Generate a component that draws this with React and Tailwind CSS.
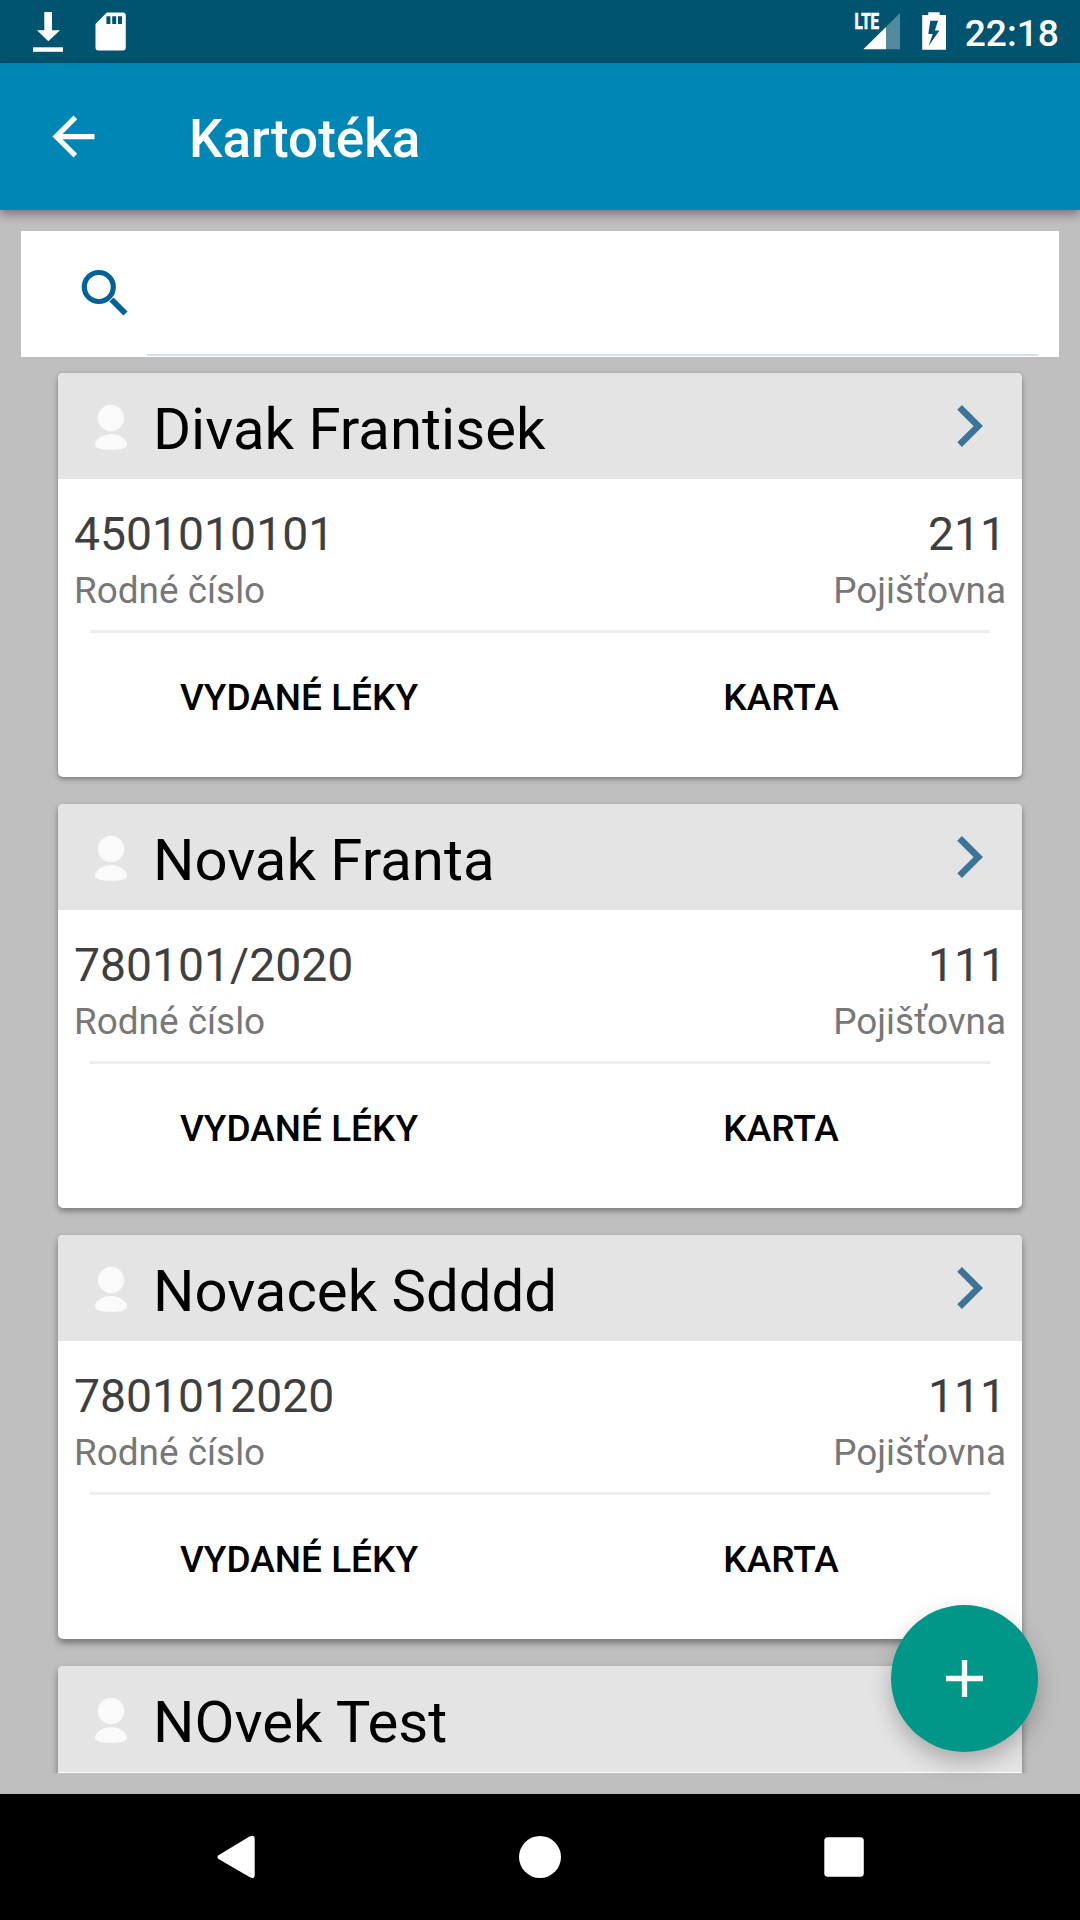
const patients = [
  { name: 'Divak Frantisek', birthNumber: '4501010101', insurer: '211', shadow: 'shadow-[0_2px_5px_rgba(0,0,0,0.38)]' },
  { name: 'Novak Franta', birthNumber: '780101/2020', insurer: '111', shadow: 'shadow-[0_3px_6px_rgba(0,0,0,0.38)]' },
  { name: 'Novacek Sdddd', birthNumber: '7801012020', insurer: '111', shadow: 'shadow-[0_4px_7px_rgba(0,0,0,0.4)]' },
  { name: 'NOvek Test', shadow: 'shadow-[0_4px_7px_rgba(0,0,0,0.4)]' },
];

function StatusBar() {
  return (
    <div className="flex h-[63px] shrink-0 items-start justify-between bg-[#00546f] text-white">
      <svg width="140" height="63" viewBox="0 0 140 63" fill="currentColor">
        <path d="M44.3 12h7.7v18.3h8L48.3 41.3 37 30.3h7.3z" />
        <path d="M33 47.3h30v4.5H33z" />
        <path
          fillRule="evenodd"
          d="M106.8 12.5h16a3 3 0 0 1 3 3v32a3 3 0 0 1-3 3H98.500a3 3 0 0 1-3-3V24zM106.400 16.300v7.700h4v-7.700zM112.200 16.300v7.700h4v-7.700zM118 16.300v7.700h4v-7.700z"
        />
      </svg>
      <div className="flex h-[63px]">
        <svg width="120" height="63" viewBox="846 0 120 63" fill="currentColor">
          <text
            x="854.6"
            y="29"
            fontSize="22"
            fontWeight="700"
            textLength="24.5"
            lengthAdjust="spacingAndGlyphs"
            fontFamily="Roboto, sans-serif"
            stroke="currentColor"
            strokeWidth="0.7"
          >
            LTE
          </text>
          <path d="M900 13v36.300H886V27z" opacity="0.32" />
          <path d="M886 27v22.300h-22.700z" />
          <path
            fillRule="evenodd"
            d="M928.300 12.300h11.400V15h6.300v34.800h-23.800V15h6.100zM930.300 20.800l-2 13.300h4.500l-4.300 12 11-15.500h-4.600l3.100-9.800z"
          />
        </svg>
        <span className="mr-[21px] flex w-[93px] justify-end whitespace-nowrap pt-[5px] text-[37.2px] font-medium leading-[57px]">
          22:18
        </span>
      </div>
    </div>
  );
}

function AppBar() {
  return (
    <header className="relative z-10 flex h-[147px] shrink-0 items-center bg-[#0086b4] text-white shadow-[0_4px_10px_rgba(0,0,0,0.4)]">
      <svg className="ml-[42px]" width="63" height="63" viewBox="0 0 24 24" fill="currentColor">
        <path d="M20 11H7.83l5.59-5.59L12 4l-8 8 8 8 1.41-1.41L7.83 13H20v-2z" />
      </svg>
      <h1 className="ml-[84px] pt-1 text-[53px] font-medium leading-[60px]">Kartotéka</h1>
    </header>
  );
}

function SearchBox() {
  return (
    <div className="mx-[21px] mt-[21px] flex h-[126px] shrink-0 bg-white">
      <svg className="ml-[49px] mt-[27px]" width="70" height="70" viewBox="70 258 70 70" fill="none" stroke="#006298">
        <circle cx="98.8" cy="287" r="14.5" strokeWidth="5.2" />
        <path d="M111.5 299.5L125.5 313.5" strokeWidth="5.8" />
      </svg>
      <div className="mb-px ml-[7px] mr-[21px] flex-1 border-b-2 border-[#d1e0ea]" />
    </div>
  );
}

function PatientDetails({ birthNumber, insurer }) {
  return (
    <>
      <div className="flex justify-between px-4 pt-[27px]">
        <div>
          <div className="text-[46.3px] leading-[56px] text-[#3f3f3f]">{birthNumber}</div>
          <div className="pt-px text-[36.9px] leading-[56px] text-[#777]">Rodné číslo</div>
        </div>
        <div className="text-right">
          <div className="text-[46.3px] leading-[56px] text-[#3f3f3f]">{insurer}</div>
          <div className="pt-px text-[36.9px] leading-[56px] text-[#777]">Pojišťovna</div>
        </div>
      </div>

      <div className="mx-8 mt-[11px] h-[3px] bg-[#eee]" />

      <div className="grid grid-cols-2 pt-[41px] text-center text-[37px] font-medium leading-[48px] text-black">
        <span>VYDANÉ LÉKY</span>
        <span>KARTA</span>
      </div>
    </>
  );
}

function PatientCard({ patient }) {
  return (
    <article className={`h-[404px] shrink-0 overflow-hidden rounded-[5px] bg-white ${patient.shadow}`}>
      <div className="flex h-[106px] items-center bg-[#e4e4e4]">
        <svg className="ml-[36px]" width="34" height="48" viewBox="94 402 34 48" fill="#fafafa">
          <circle cx="111" cy="418" r="13.2" />
          <path d="M111 434c9 0 16 5.5 16 10.5 0 4-7 5.3-16 5.3s-16-1.3-16-5.3c0-5 7-10.5 16-10.5z" />
        </svg>
        <h2 className="ml-[25px] flex-1 pt-[5px] text-[58.1px] leading-[68px] text-black">{patient.name}</h2>
        <svg className="mr-[36px]" width="32" height="48" viewBox="954 402 32 48" fill="none" stroke="#3c7497" strokeWidth="6.6">
          <path d="M959.6 407.4L978.3 426.1L959.6 444.7" />
        </svg>
      </div>
      {patient.birthNumber && <PatientDetails birthNumber={patient.birthNumber} insurer={patient.insurer} />}
    </article>
  );
}

function NavigationBar() {
  return (
    <nav className="h-[126px] shrink-0 bg-black">
      <svg width="1080" height="126" viewBox="0 1794 1080 126" fill="#fff">
        <path d="M218.5 1855.2L249.5 1836.5Q254.7 1834 254.7 1839V1875Q254.7 1880 249.5 1877L218.5 1859Q216.3 1857 218.5 1855.2z" />
        <circle cx="540" cy="1857" r="21" />
        <rect x="824.3" y="1837.2" width="39.5" height="39.6" rx="3.5" />
      </svg>
    </nav>
  );
}

export default function App() {
  return (
    <div className="relative flex h-[1920px] w-[1080px] flex-col overflow-hidden bg-[#bfbfbf] font-[Roboto,sans-serif]">
      <StatusBar />
      <AppBar />
      <SearchBox />
      <main className="mb-[21px] flex min-h-0 flex-1 flex-col gap-[27px] overflow-hidden px-[58px] pt-4">
        {patients.map((patient) => (
          <PatientCard key={patient.name} patient={patient} />
        ))}
      </main>
      <NavigationBar />

      {/* Add patient */}
      <button className="absolute bottom-[168px] right-[42px] flex size-[147px] items-center justify-center rounded-full bg-[#009688] shadow-[0_10px_22px_rgba(0,0,0,0.25)]">
        <svg width="37" height="37" viewBox="0 0 37 37" stroke="#fff" strokeWidth="5.3">
          <path d="M0 18.5H37M18.5 0V37" />
        </svg>
      </button>
    </div>
  );
}
